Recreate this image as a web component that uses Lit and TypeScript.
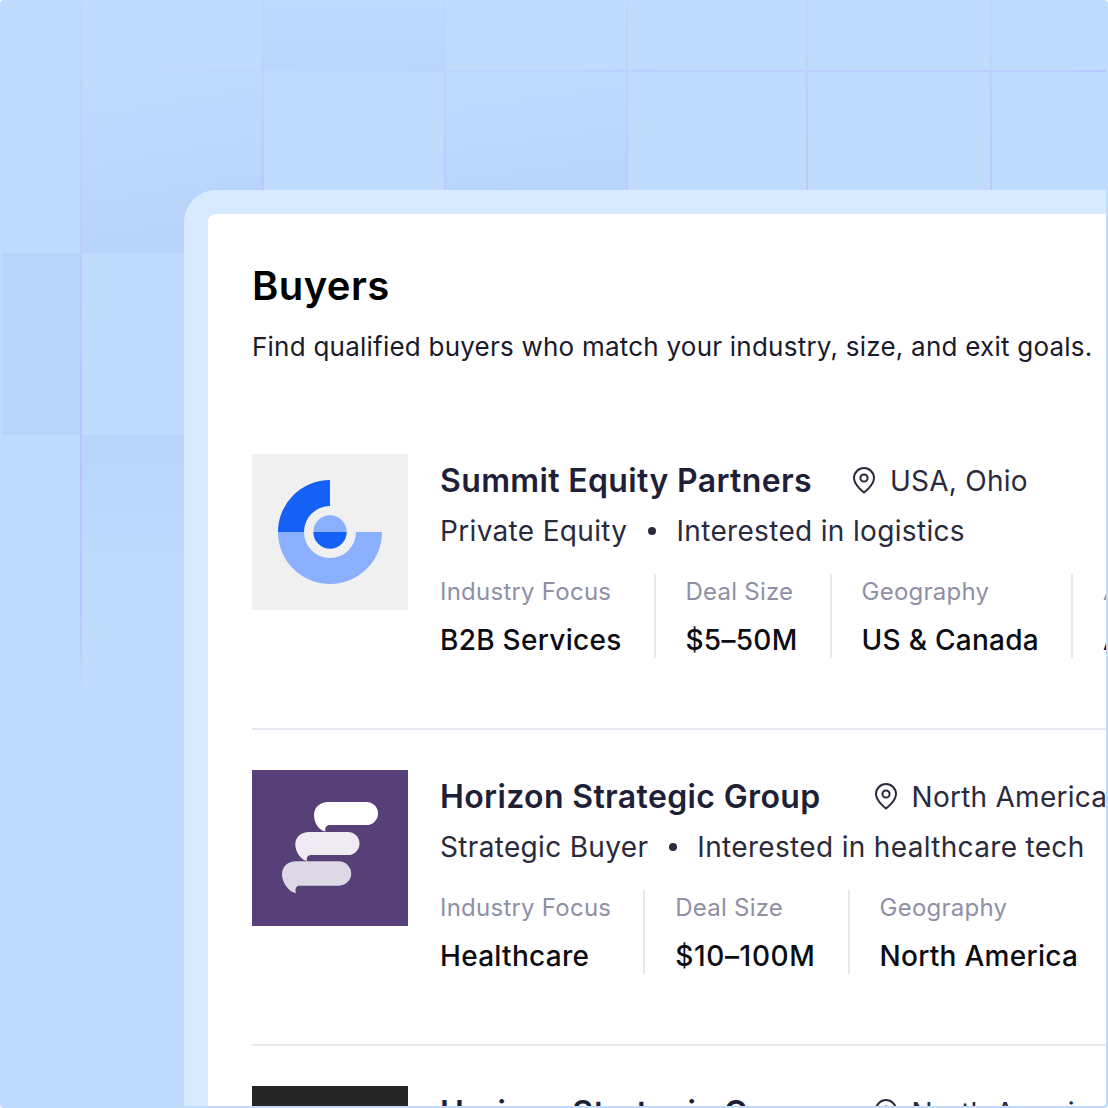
import { LitElement, css, html, svg } from "lit";
import { customElement } from "lit/decorators.js";

interface Stat {
  label: string;
  value: string;
  wide?: boolean;
}

interface Buyer {
  name: string;
  place: string;
  kind: string;
  interest: string;
  logo: string;
  far?: boolean;
  stats: Stat[];
}

const buyers: Buyer[] = [
  {
    name: "Summit Equity Partners",
    place: "USA, Ohio",
    kind: "Private Equity",
    interest: "Interested in logistics",
    logo: "summit",
    stats: [
      { label: "Industry Focus", value: "B2B Services" },
      { label: "Deal Size", value: "$5–50M" },
      { label: "Geography", value: "US & Canada" },
      { label: "Acquisitions", value: "Add-ons" },
    ],
  },
  {
    name: "Horizon Strategic Group",
    place: "North America",
    kind: "Strategic Buyer",
    interest: "Interested in healthcare tech",
    logo: "horizon",
    far: true,
    stats: [
      { label: "Industry Focus", value: "Healthcare" },
      { label: "Deal Size", value: "$10–100M", wide: true },
      { label: "Geography", value: "North America" },
    ],
  },
  {
    name: "Horizon Strategic Group",
    place: "North America",
    kind: "Strategic Buyer",
    interest: "Interested in healthcare tech",
    logo: "dark",
    far: true,
    stats: [
      { label: "Industry Focus", value: "Healthcare" },
      { label: "Deal Size", value: "$10–100M", wide: true },
      { label: "Geography", value: "North America" },
    ],
  },
];

const summitLogo = svg`
  <rect width="156" height="156" fill="#f0f0f0" />
  <path d="M78 26A52 52 0 0 0 26 78H52A26 26 0 0 1 78 52Z" fill="#1560f5" />
  <path d="M26 78A52 52 0 0 0 130 78H104A26 26 0 0 1 52 78Z" fill="#8ab0ff" />
  <path d="M61.3 78A16.7 16.7 0 0 1 94.7 78Z" fill="#8ab0ff" />
  <path d="M61.3 78A16.7 16.7 0 0 0 94.7 78Z" fill="#1560f5" />
`;

const horizonLogo = svg`
  <rect width="156" height="156" fill="#573f78" />
  <path d="M76 32H114.5A11.5 11.5 0 0 1 114.5 55H78C74.5 55 72.5 57.5 73.5 61.5C66 60 62 52 62 45C62 37.5 68 32 76 32Z" fill="#fff" />
  <path d="M57 62H96A11.4 11.4 0 0 1 96 85H59C55.8 85 54 88 55 91C48 89.5 43.3 81 43.3 74.5C43.3 67 49 62 57 62Z" fill="#eeecf2" />
  <path d="M44 91.3H87A12.2 12.2 0 0 1 87 115.7H47C44.5 115.7 42.5 119 44 123.3C36 121.5 30 112 30 104.5C30 96.5 36 91.3 44 91.3Z" fill="#dcd8e4" />
`;

const darkLogo = svg`<rect width="156" height="156" fill="#252525" />`;

const logos: Record<string, unknown> = {
  summit: summitLogo,
  horizon: horizonLogo,
  dark: darkLogo,
};

@customElement("app-root")
export class AppRoot extends LitElement {
  static styles = css`
    :host {
      display: block;
      width: 1108px;
      height: 1108px;
      background: #fff;
      font-family: Inter, "Noto Sans", sans-serif;
    }
    .page {
      position: relative;
      box-sizing: border-box;
      width: 1108px;
      height: 1108px;
      padding: 190px 2px 2px 184px;
      border-radius: 4px;
      overflow: hidden;
      background: #bfdcff;
    }

    /* faint tile pattern behind the panel */
    .tiles {
      position: absolute;
      inset: 2px 2px 0 0;
      display: grid;
      grid-template-columns: 81px 182px 182px 182px 180px 184px 1fr;
      grid-template-rows: 69px repeat(3, 182px) 1fr;
    }
    .tile-a {
      grid-column: 3;
      grid-row: 1;
      background: linear-gradient(180deg, #bddaff, #b8d5fc);
    }
    .tile-b {
      grid-column: 2;
      grid-row: 2;
      background: linear-gradient(170deg, #bfdcff 5%, #b7d3fa 85%);
    }
    .tile-c {
      grid-column: 4;
      grid-row: 2;
      background: linear-gradient(172deg, #bfdcff 5%, #b8d4fb 65%);
    }
    .tile-d {
      grid-column: 1;
      grid-row: 3;
      margin-left: 2px;
      background: #b8d4fa;
    }
    .tile-e {
      grid-column: 2;
      grid-row: 4;
      background: linear-gradient(180deg, #b8d4fa, #bfdcff 85%);
    }
    .line-v {
      grid-row: 1 / 3;
      width: 2px;
      margin-left: -1px;
      background: linear-gradient(180deg, #bed6ff, #bcc8ff 75%);
    }
    .line-v.first {
      grid-column: 2;
      grid-row: 1 / -1;
      background: linear-gradient(180deg, #bfd6ff, #bcc4ff 35%, #bcc4ff 55%, #bfdcff 63%);
    }
    .line-v.c3 { grid-column: 3; }
    .line-v.c4 { grid-column: 4; }
    .line-v.c5 { grid-column: 5; }
    .line-v.c6 { grid-column: 6; }
    .line-v.c7 { grid-column: 7; }
    .line-h {
      grid-column: 1 / -1;
      height: 2px;
      margin-top: -1px;
      background: linear-gradient(90deg, #bfdcff, #bcd2ff 50%, #bccbff);
    }
    .line-h.r2 { grid-row: 2; }

    .frame {
      position: relative;
      box-sizing: border-box;
      height: 100%;
      padding: 24px 0 0 24px;
      border-radius: 32px 0 4px 0;
      background: #d8eaff;
      overflow: hidden;
    }
    .card {
      box-sizing: border-box;
      height: 100%;
      padding: 44px 0 0 44px;
      border-radius: 8px 0 4px 0;
      background: #fff;
      overflow: hidden;
    }
    h1 {
      margin: 0;
      font-size: 40px;
      line-height: 56px;
      letter-spacing: 0.4px;
      font-weight: 600;
      color: #000;
    }
    .lead {
      margin: 15px 0 0;
      font-size: 26px;
      line-height: 36px;
      letter-spacing: 0.23px;
      color: #1a1a2b;
      white-space: nowrap;
    }
    .list {
      margin-top: 89px;
      width: 900px;
    }
    .buyer {
      display: flex;
      gap: 32px;
      padding-bottom: 70px;
      margin-bottom: 40px;
      border-bottom: 2px solid #e7e8ef;
    }
    .logo {
      flex: none;
      display: block;
      width: 156px;
      height: 156px;
    }
    .info {
      flex: 1;
      min-width: 0;
    }
    .head {
      display: flex;
      align-items: center;
      height: 54px;
      white-space: nowrap;
    }
    .name {
      margin-top: -2px;
      font-size: 32px;
      letter-spacing: 0.36px;
      font-weight: 600;
      color: #1f1f37;
    }
    .place {
      display: flex;
      align-items: center;
      gap: 14px;
      margin-left: 40px;
      font-size: 28px;
      letter-spacing: 0.25px;
      color: #2a2a3c;
    }
    .place.far {
      margin-left: 53px;
    }
    .pin {
      flex: none;
      width: 24px;
      height: 28px;
      fill: none;
      stroke: #2a2a3c;
      stroke-width: 2;
    }
    .meta {
      display: flex;
      align-items: center;
      gap: 20px;
      height: 46px;
      font-size: 28px;
      letter-spacing: 0.33px;
      color: #2a2a3c;
      white-space: nowrap;
    }
    .dot {
      width: 8px;
      height: 8px;
      margin-left: 1px;
      border-radius: 50%;
      background: #2a2a3c;
    }
    .stats {
      display: flex;
      margin-top: 20px;
      white-space: nowrap;
    }
    .stat {
      height: 84px;
      padding: 0 32px 0 30px;
      border-right: 2px solid #e7e8ef;
    }
    .stat:first-child {
      padding-left: 0;
    }
    .stat:last-child {
      border-right: 0;
    }
    .label {
      font-size: 24px;
      line-height: 36px;
      letter-spacing: 0.24px;
      color: #8f90a6;
    }
    .value {
      margin-top: 12px;
      font-size: 28px;
      line-height: 36px;
      letter-spacing: 0.28px;
      font-weight: 500;
      color: #0c0c14;
    }
    .value.wide {
      letter-spacing: 0.65px;
    }
  `;

  renderBuyer(b: Buyer) {
    return html`
      <article class="buyer">
        <svg class="logo" viewBox="0 0 156 156">${logos[b.logo]}</svg>
        <div class="info">
          <div class="head">
            <span class="name">${b.name}</span>
            <span class="place ${b.far ? "far" : ""}">
              <svg class="pin" viewBox="0 0 24 28">
                <path d="M12 25.5C12 25.5 2 18 2 11A10 10 0 0 1 22 11C22 18 12 25.5 12 25.5Z" />
                <circle cx="12" cy="11" r="3.6" />
              </svg>
              ${b.place}
            </span>
          </div>
          <div class="meta">
            <span>${b.kind}</span>
            <span class="dot"></span>
            <span>${b.interest}</span>
          </div>
          <div class="stats">
            ${b.stats.map(
              (s) => html`
                <div class="stat">
                  <div class="label">${s.label}</div>
                  <div class="value ${s.wide ? "wide" : ""}">${s.value}</div>
                </div>
              `
            )}
          </div>
        </div>
      </article>
    `;
  }

  render() {
    return html`
      <div class="page">
        <div class="tiles">
          <div class="tile-a"></div>
          <div class="tile-b"></div>
          <div class="tile-c"></div>
          <div class="tile-d"></div>
          <div class="tile-e"></div>
          <div class="line-h r2"></div>
          <div class="line-v first"></div>
          <div class="line-v c3"></div>
          <div class="line-v c4"></div>
          <div class="line-v c5"></div>
          <div class="line-v c6"></div>
          <div class="line-v c7"></div>
        </div>
        <div class="frame">
          <section class="card">
            <h1>Buyers</h1>
            <p class="lead">Find qualified buyers who match your industry, size, and exit goals.</p>
            <div class="list">${buyers.map((b) => this.renderBuyer(b))}</div>
          </section>
        </div>
      </div>
    `;
  }
}
